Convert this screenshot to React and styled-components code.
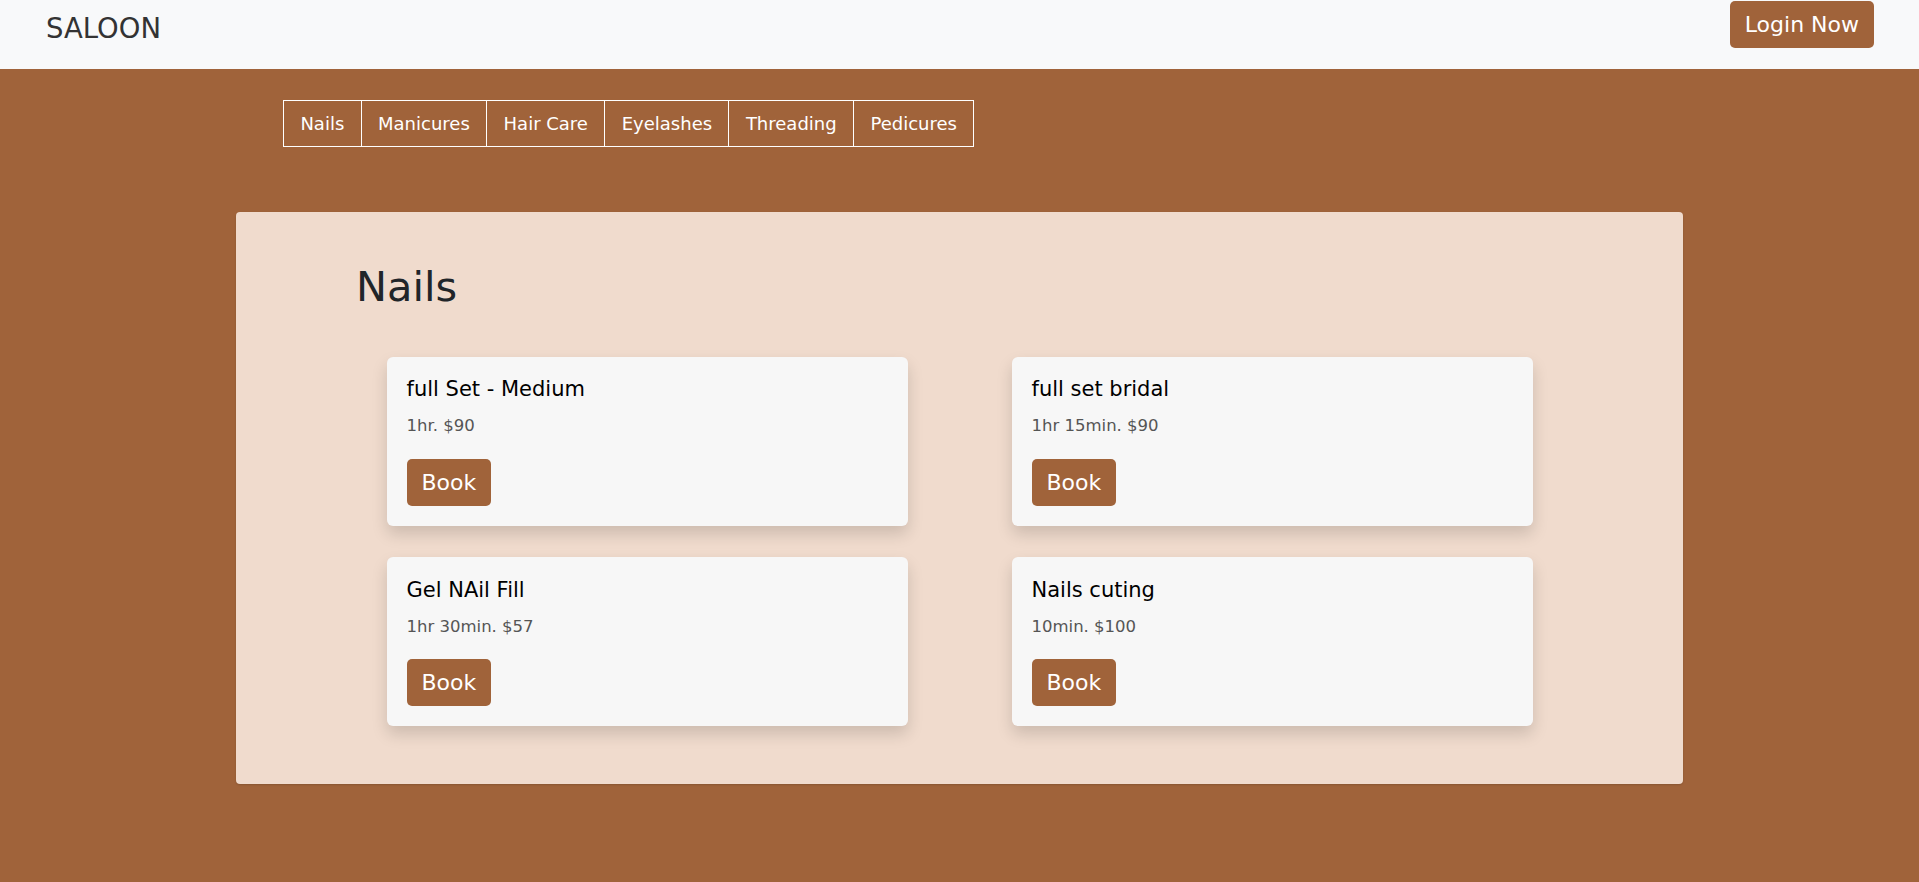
import React from 'react';
import styled, { createGlobalStyle } from 'styled-components';

const GlobalStyle = createGlobalStyle`
  * {
    box-sizing: border-box;
  }

  body {
    margin: 0;
    font-family: "DejaVu Sans", "Liberation Sans", sans-serif;
    background: #a0633a;
  }
`;

const Page = styled.div`
  min-height: 100vh;
  background: #a0633a;
`;

const Header = styled.header`
  height: 69px;
  background: #f8f9fa;
  display: flex;
  justify-content: space-between;
  align-items: flex-start;
  padding: 0 45px 0 46px;
`;

const Brand = styled.div`
  margin-top: 8px;
  font-size: 27.5px;
  line-height: 1.5;
  color: #333;
`;

const Button = styled.button`
  font-family: inherit;
  font-size: 22px;
  line-height: 1.5;
  padding: 7px 15px;
  color: #fff;
  background: #a0633a;
  border: none;
  border-radius: 5px;
  cursor: pointer;
  margin-top: ${(p) => p.$top || 0}px;
`;

const Container = styled.main`
  width: 1447px;
  margin: 0 auto;
  padding: 31px 0 99px;
`;

const Tabs = styled.nav`
  display: flex;
  margin-left: 47px;
`;

const Tab = styled.button`
  font-family: inherit;
  font-size: 18px;
  line-height: 1.5;
  padding: 9px 16.4px;
  color: #fff;
  background: transparent;
  border: 1px solid #fff;
  cursor: pointer;

  & + & {
    margin-left: -1px;
  }
`;

const Panel = styled.section`
  margin-top: 65px;
  background: #f0dbcd;
  border-radius: 4px;
  box-shadow: 0 1px 2px rgba(0, 0, 0, 0.15);
  padding: 50px 0 58px;
`;

const Heading = styled.h2`
  margin: 0 0 45px 120px;
  font-size: 41.5px;
  font-weight: 400;
  line-height: 1.2;
  color: #212529;
`;

const Grid = styled.div`
  width: 1146px;
  margin: 0 auto;
  display: grid;
  grid-template-columns: 521px 521px;
  column-gap: 104px;
  row-gap: 31.5px;
`;

const Card = styled.div`
  background: #f7f7f7;
  border-radius: 6px;
  box-shadow: 0 0.5rem 1rem rgba(0, 0, 0, 0.15);
  padding: 20.5px 20px 20px;
`;

const CardTitle = styled.h5`
  margin: 0 0 12px;
  font-size: 21px;
  font-weight: 400;
  line-height: 1.2;
  color: #000;
`;

const Price = styled.p`
  margin: 0 0 19.5px;
  font-size: 16.5px;
  line-height: 1.5;
  color: #555;
`;

const categories = ['Nails', 'Manicures', 'Hair Care', 'Eyelashes', 'Threading', 'Pedicures'];

const services = [
  { name: 'full Set - Medium', detail: '1hr. $90' },
  { name: 'full set bridal', detail: '1hr 15min. $90' },
  { name: 'Gel NAil Fill', detail: '1hr 30min. $57' },
  { name: 'Nails cuting', detail: '10min. $100' },
];

function App() {
  return (
    <Page>
      <GlobalStyle />
      <Header>
        <Brand>SALOON</Brand>
        <Button $top={1}>Login Now</Button>
      </Header>
      <Container>
        <Tabs>
          {categories.map((c) => (
            <Tab key={c}>{c}</Tab>
          ))}
        </Tabs>
        <Panel>
          <Heading>Nails</Heading>
          <Grid>
            {services.map((s) => (
              <Card key={s.name}>
                <CardTitle>{s.name}</CardTitle>
                <Price>{s.detail}</Price>
                <Button>Book</Button>
              </Card>
            ))}
          </Grid>
        </Panel>
      </Container>
    </Page>
  );
}

export default App;
